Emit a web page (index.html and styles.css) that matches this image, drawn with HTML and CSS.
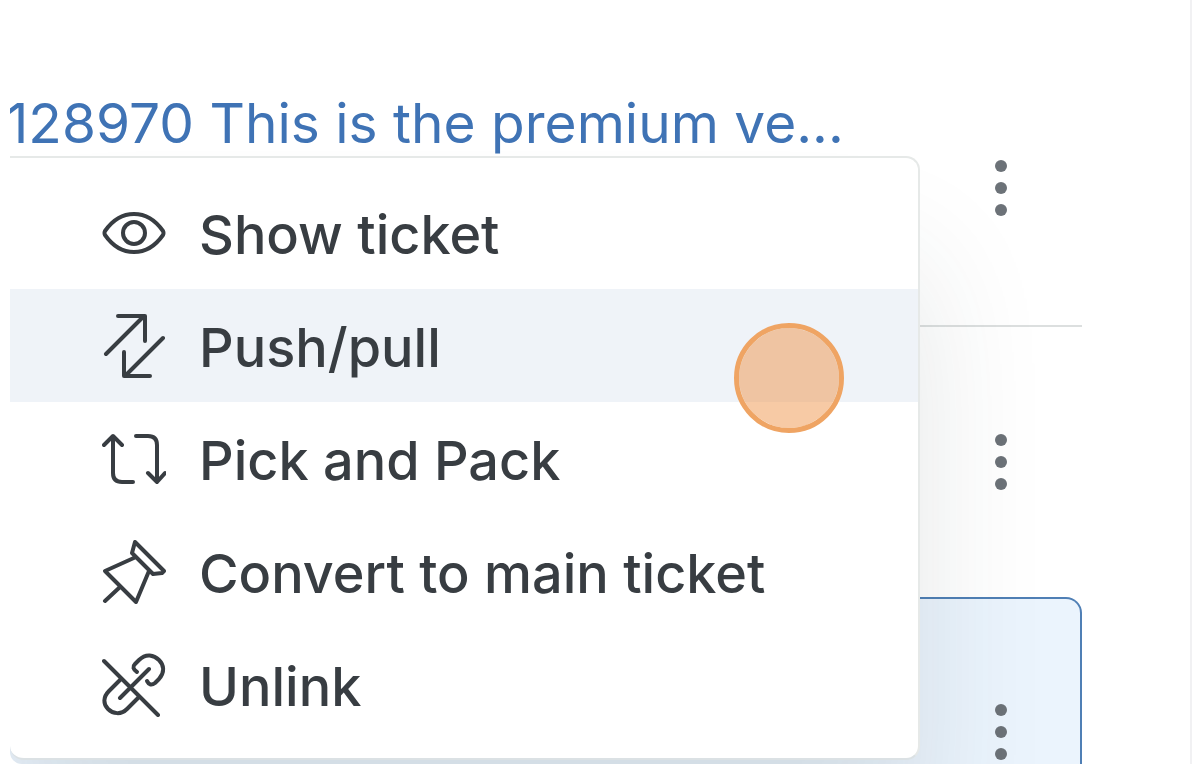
FILE: index.html
```
<!DOCTYPE html>
<html lang="en">

<head>
    <meta charset="UTF-8">
    <meta name="viewport" content="width=device-width, initial-scale=1.0">
    <title>Linked tickets</title>
    <link rel="stylesheet" href="styles.css">
</head>

<body>
    <main class="panel">
        <div class="ticket-list">
            <article class="ticket">
                <a class="ticket-title" href="#">128970 This is the premium ve...</a>
                <button class="ticket-more" type="button" aria-label="Ticket actions">
                    <span class="dot"></span><span class="dot"></span><span class="dot"></span>
                </button>
            </article>
            <article class="ticket">
                <button class="ticket-more" type="button" aria-label="Ticket actions">
                    <span class="dot"></span><span class="dot"></span><span class="dot"></span>
                </button>
            </article>
            <article class="ticket ticket-current">
                <button class="ticket-more" type="button" aria-label="Ticket actions">
                    <span class="dot"></span><span class="dot"></span><span class="dot"></span>
                </button>
            </article>
        </div>

        <div class="menu">
            <button class="menu-item" type="button">
                <svg class="icon" viewBox="0 0 64 64">
                    <path d="M3 30C10 20 20 13 32 13s22 7 29 17q1 2 0 4C54 44 44 51 32 51S10 44 3 34q-1-2 0-4z" />
                    <circle cx="32" cy="32" r="11" />
                </svg>
                Show ticket
            </button>
            <button class="menu-item active" type="button">
                <svg class="icon" viewBox="0 0 64 64">
                    <path d="M4 40L42 2M16 2h27v25" />
                    <path d="M61 24L23 62M22 38v24h26" />
                </svg>
                Push/pull
            </button>
            <button class="menu-item" type="button">
                <svg class="icon" viewBox="0 0 64 64">
                    <path d="M11 10v36q0 9 9 9h11M2 18l9-9 9 9" />
                    <path d="M34 9h12q9 0 9 9v37M46 46l9 9 8-9" />
                </svg>
                Pick and Pack
            </button>
            <button class="menu-item" type="button">
                <svg class="icon" viewBox="0 0 64 64">
                    <path d="M33 2l29 29-2 2-9 1L30 13zM34 17L3 31l31 31 13-31M18 47L3 61" />
                </svg>
                Convert to main ticket
            </button>
            <button class="menu-item" type="button">
                <svg class="icon" viewBox="0 0 64 64">
                    <path d="M2 8l54 54M18 45l29-29" />
                    <path d="M35 19q-6-4-2-8l4-4c7-7 15-5 20 0s6 12 0 19l-4 4q-5 4-8-2" />
                    <path d="M19 26L7 38c-6 6-6 13-1 18s13 6 19 0l12-12" />
                </svg>
                Unlink
            </button>
            <span class="click-marker"></span>
        </div>
    </main>
</body>

</html>
```

FILE: styles.css
```
* {
    box-sizing: border-box;
}

body {
    margin: 0;
    background-color: #fff;
    font-family: Inter, "Liberation Sans", sans-serif;
    font-size: 54px;
    font-weight: 500;
    line-height: 68px;
    color: #383d42;
}

.panel {
    position: relative;
    height: 100vh;
    margin-left: 10px;
    overflow: hidden;
    border-right: 2px solid #f1f1f3;
    border-radius: 12px 0 0 12px;
}

.ticket-list {
    padding: 55px 108px 0 0;
}

.ticket {
    display: flex;
    align-items: center;
    min-height: 270px;
}

.ticket:first-child {
    min-height: 272px;
    padding-bottom: 4px;
    border-bottom: 2px solid #dcdfdf;
}

.ticket-title {
    align-self: flex-start;
    margin: 34px 0 0 -4px;
    color: #3f73b5;
    font-size: 55px;
    font-weight: 400;
    text-decoration: none;
    white-space: nowrap;
}

.ticket-current {
    border: 2px solid #4f7fb5;
    border-left: none;
    border-radius: 16px;
    background-color: #ebf4fd;
}

.ticket-more {
    display: flex;
    flex-direction: column;
    gap: 10px;
    margin-left: auto;
    padding: 10px 75px;
    border: none;
    background: none;
    cursor: pointer;
}

.ticket-current .ticket-more {
    padding-right: 73px;
}

.dot {
    width: 12px;
    height: 12px;
    border-radius: 50%;
    background-color: #6c7278;
}

.menu {
    position: absolute;
    top: 156px;
    left: 0;
    right: 270px;
    padding: 18px 0 17px;
    border: 2px solid #e6e9e8;
    border-left: none;
    border-bottom-color: #dbe1e4;
    border-radius: 0 14px 14px 14px;
    background-color: #fff;
    box-shadow: 0 110px 130px rgba(40, 60, 60, 0.12);
}

.menu-item {
    display: flex;
    align-items: flex-start;
    gap: 33px;
    width: 100%;
    padding: 25px 0 20px 92px;
    border: none;
    background: none;
    color: inherit;
    font: inherit;
    text-align: left;
    white-space: nowrap;
    cursor: pointer;
}

.menu-item.active {
    background-color: #eff3f8;
}

.icon {
    flex: none;
    width: 64px;
    height: 64px;
    fill: none;
    stroke: #383d42;
    stroke-width: 4;
    stroke-linecap: round;
    stroke-linejoin: round;
}

.click-marker {
    position: absolute;
    top: 165px;
    right: 74px;
    width: 110px;
    height: 110px;
    border: 5px solid #efa463;
    border-radius: 50%;
    background-color: rgba(239, 150, 76, 0.5);
    background-clip: padding-box;
}
```
